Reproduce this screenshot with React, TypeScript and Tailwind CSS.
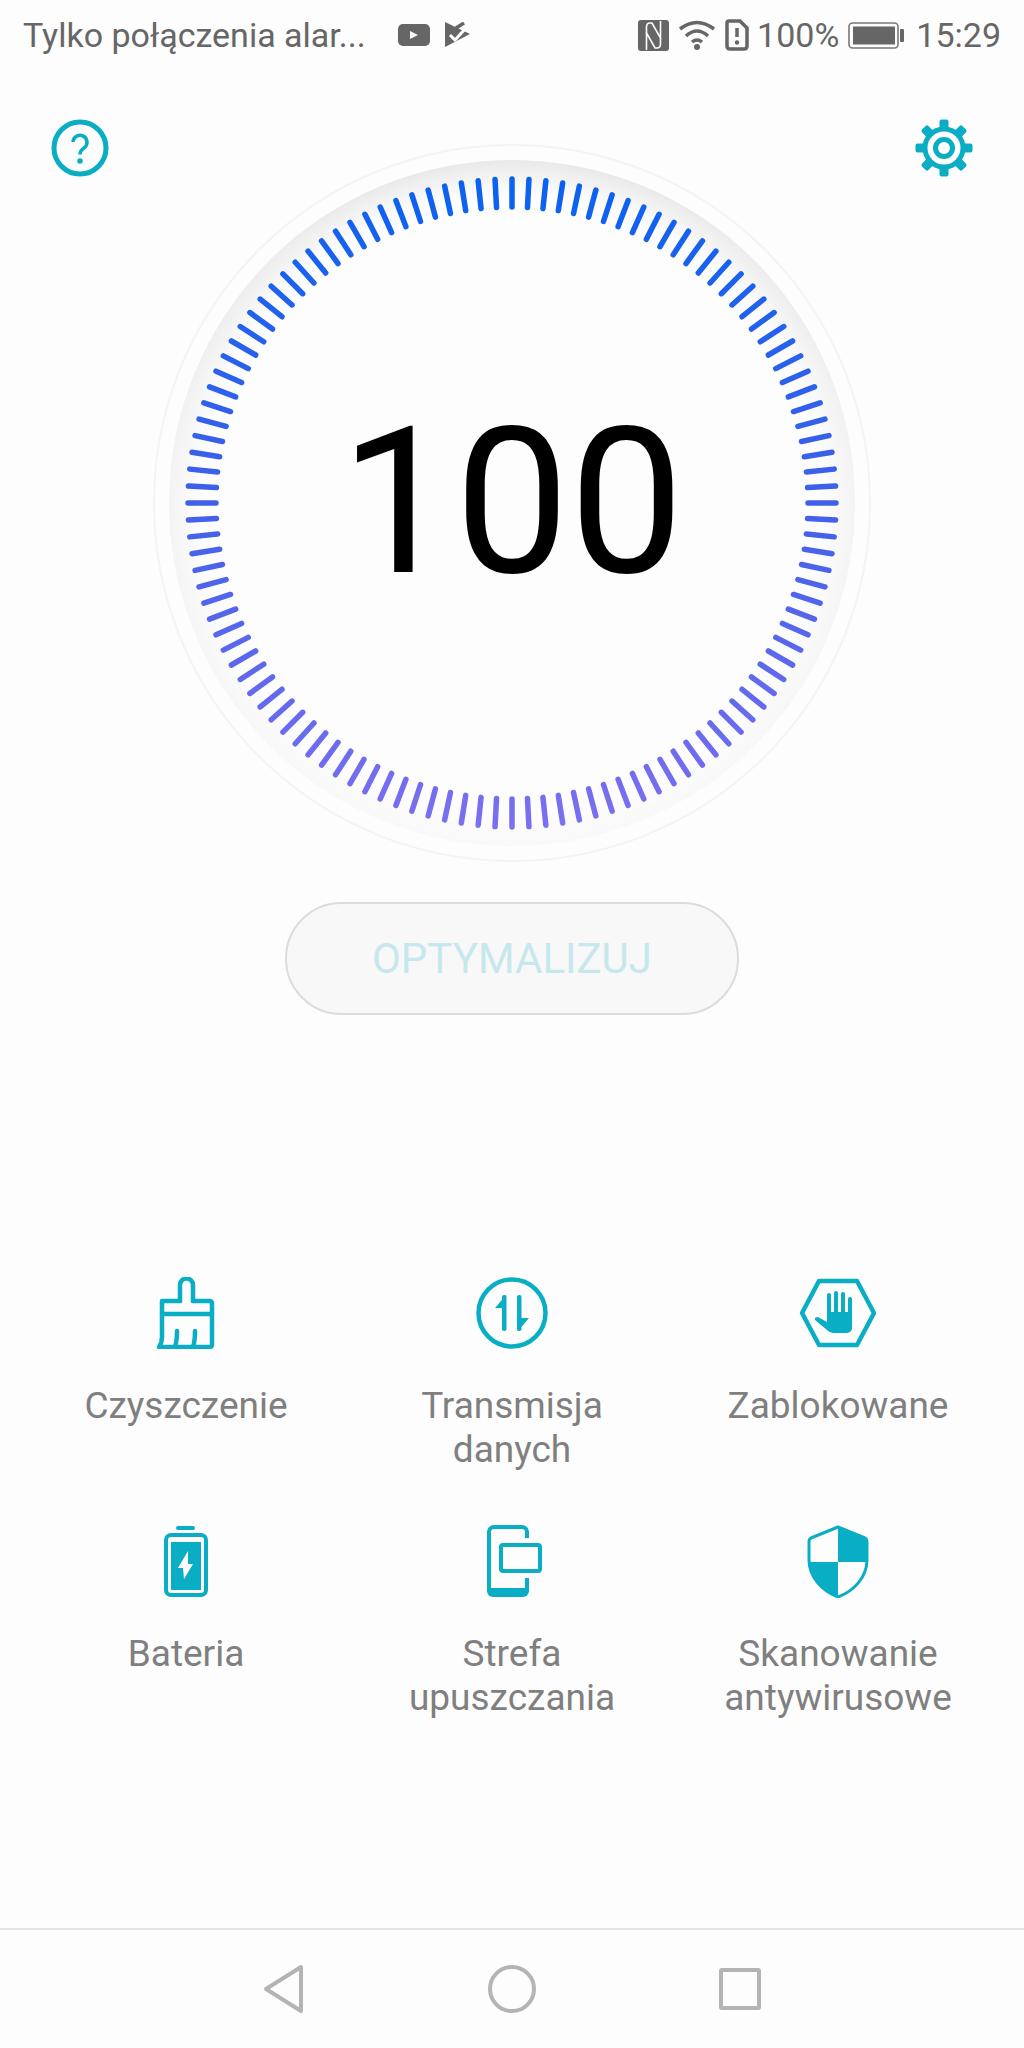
const TEAL = "#0aaec4";

const ticks = Array.from({ length: 120 }, (_, i) => i * 3);

const Dial = () => (
  <div className="relative w-[718px] h-[718px] mt-[24px] shrink-0">
    <svg width="718" height="718" viewBox="0 0 718 718" className="block">
      <defs>
        <linearGradient id="band" x1="0" y1="0" x2="0" y2="1">
          <stop offset="0" stopColor="#e9e9e9" />
          <stop offset="0.5" stopColor="#f4f4f4" />
          <stop offset="1" stopColor="#f9f9f9" />
        </linearGradient>
        <radialGradient id="fade" cx="0.5" cy="0.5" r="0.5">
          <stop offset="0.9" stopColor="#fdfdfd" stopOpacity="1" />
          <stop offset="1" stopColor="#fdfdfd" stopOpacity="0" />
        </radialGradient>
        <linearGradient id="ticks" gradientUnits="userSpaceOnUse" x1="0" y1="32" x2="0" y2="686">
          <stop offset="0" stopColor="#0a62f0" />
          <stop offset="0.5" stopColor="#4060ea" />
          <stop offset="1" stopColor="#7b70f0" />
        </linearGradient>
      </defs>
      <circle cx="359" cy="359" r="358" fill="none" stroke="#f4f4f4" strokeWidth="2" />
      <circle cx="359" cy="359" r="343" fill="url(#band)" />
      <circle cx="359" cy="359" r="343" fill="url(#fade)" />
      <path
        d={ticks
          .map((a) => {
            const r = (a * Math.PI) / 180;
            const x = Math.sin(r);
            const y = -Math.cos(r);
            return `M${359 + x * 296} ${359 + y * 296}L${359 + x * 324} ${359 + y * 324}`;
          })
          .join("")}
        fill="none"
        stroke="url(#ticks)"
        strokeWidth="5.5"
        strokeLinecap="round"
      />
    </svg>
    <div className="absolute inset-0 flex items-center justify-center text-[204px] leading-none text-black">
      100
    </div>
  </div>
);

const StatusBar = () => (
  <div className="h-[70px] flex items-center pl-[23px] pr-[23px] text-[34px] text-[#666666] shrink-0">
    <span className="w-[375px] whitespace-nowrap">Tylko połączenia alar...</span>
    <svg width="32" height="22" viewBox="0 0 32 22" className="shrink-0">
      <rect width="32" height="22" rx="5" fill="#666666" />
      <path d="M12 7 L20 11 L12 15Z" fill="#fdfdfd" />
    </svg>
    <svg width="26" height="26" viewBox="0 0 26 26" className="ml-[15px] shrink-0">
      <path d="M0 0 L25 12 L0 25Z" fill="#666666" />
      <path d="M11 6 L19 1" stroke="#666666" strokeWidth="3.5" fill="none" />
      <path d="M5 13 L10 18 L20 7" stroke="#fdfdfd" strokeWidth="3" fill="none" />
    </svg>
    <div className="flex-1" />
    <svg width="31" height="31" viewBox="0 0 31 31" className="shrink-0">
      <rect width="31" height="31" rx="3" fill="#666666" />
      <path d="M8.5 30 V7 Q8.5 3 12 3 H14 L23 19 M22.5 1 V24 Q22.5 28 19 28 H17 L8 12" stroke="#fdfdfd" strokeWidth="1.6" fill="none" />
    </svg>
    <svg width="38" height="30" viewBox="0 0 38 30" className="ml-[9px] shrink-0">
      <path d="M2 9 Q19 -4 36 9" stroke="#666666" strokeWidth="3.5" fill="none" />
      <path d="M8 16 Q19 6 30 16" stroke="#666666" strokeWidth="3.5" fill="none" />
      <path d="M14 22 Q19 18 24 22" stroke="#666666" strokeWidth="3.5" fill="none" />
      <circle cx="19" cy="27" r="3" fill="#666666" />
    </svg>
    <svg width="24" height="32" viewBox="0 0 24 32" className="ml-[9px] shrink-0">
      <path d="M4 2 H15 L22 9 V27 Q22 30 19 30 H5 Q2 30 2 27 V4 Q2 2 4 2Z" stroke="#666666" strokeWidth="3.5" fill="none" />
      <path d="M12 9 V18" stroke="#666666" strokeWidth="3.5" />
      <circle cx="12" cy="23.5" r="2.2" fill="#666666" />
    </svg>
    <span className="ml-[8px]">100%</span>
    <svg width="56" height="27" viewBox="0 0 56 27" className="ml-[9px] shrink-0">
      <rect x="1" y="1" width="49" height="25" rx="3.5" fill="none" stroke="#777777" strokeWidth="1.6" />
      <rect x="5" y="4.5" width="42" height="18" fill="#666666" />
      <rect x="52" y="7" width="4" height="13" rx="1" fill="#666666" />
    </svg>
    <span className="ml-[12px]">15:29</span>
  </div>
);

const HelpIcon = () => (
  <svg width="58" height="58" viewBox="0 0 58 58" className="shrink-0 -mt-[1px]">
    <circle cx="29" cy="29" r="26" fill="none" stroke={TEAL} strokeWidth="5" />
    <path d="M22 23 a7 7 0 1 1 11 6 q-4 2.5 -4 6.5" fill="none" stroke={TEAL} strokeWidth="3.5" />
    <circle cx="29" cy="42" r="2.8" fill={TEAL} />
  </svg>
);

const GearIcon = () => (
  <svg width="58" height="58" viewBox="0 0 58 58" className="shrink-0 -mt-[1px]">
    {[0, 45, 90, 135, 180, 225, 270, 315].map((a) => (
      <rect key={a} x="24.5" y="0.5" width="9" height="10" rx="2" fill={TEAL} transform={`rotate(${a} 29 29)`} />
    ))}
    <circle cx="29" cy="29" r="19" fill="none" stroke={TEAL} strokeWidth="5" />
    <circle cx="29" cy="29" r="8.5" fill="none" stroke={TEAL} strokeWidth="5" />
  </svg>
);

const BrushIcon = () => (
  <svg width="60" height="72" viewBox="0 0 60 72" fill="none" stroke={TEAL} strokeWidth="4.5" strokeLinecap="round" strokeLinejoin="round" className="-ml-[2px]">
    <path d="M25 24 V8 a6.5 6.5 0 0 1 13 0 V24" />
    <path d="M25 24 H7 V60 Q7 66 4 70 H55 a2 2 0 0 0 2 -2 V26 a2 2 0 0 0 -2 -2 H38" />
    <path d="M7 37 H57" />
    <path d="M22 54 Q22 64 20 70 M40 54 Q40 64 38 70" />
  </svg>
);

const TransferIcon = () => (
  <svg width="76" height="76" viewBox="0 0 76 76" fill={TEAL}>
    <circle cx="38" cy="38" r="33.5" fill="none" stroke={TEAL} strokeWidth="4.5" />
    <rect x="28" y="20" width="4.5" height="36" rx="2" />
    <path d="M32 20 L21 33 H32Z" />
    <rect x="43" y="20" width="4.5" height="36" rx="2" />
    <path d="M44 56 L55 43 H44Z" />
  </svg>
);

const BlockedIcon = () => (
  <svg width="76" height="70" viewBox="0 0 76 70" fill={TEAL}>
    <path d="M19 3 H57 L74 35 L57 67 H19 L2 35 Z" fill="none" stroke={TEAL} strokeWidth="4.5" strokeLinejoin="round" />
    <rect x="27" y="15" width="4" height="22" rx="2" />
    <rect x="34" y="13" width="4" height="24" rx="2" />
    <rect x="41" y="14" width="4" height="24" rx="2" />
    <rect x="48" y="19" width="4" height="20" rx="2" />
    <path d="M27 34 H52 V50 a5 5 0 0 1 -5 5 H33 Q30 55 27 52 L15 42 Q14 39 18 39 L27 44 Z" />
  </svg>
);

const BatteryIcon = () => (
  <svg width="44" height="73" viewBox="0 0 44 73" fill={TEAL}>
    <rect x="12" y="1" width="19" height="4" rx="2" />
    <rect x="2" y="10" width="40" height="60" rx="5" fill="none" stroke={TEAL} strokeWidth="4" />
    <rect x="7" y="17" width="30" height="48" />
    <path d="M24 26 L14 43 H19 L20 54 L29 39 H24Z" fill="#fdfdfd" />
  </svg>
);

const DropZoneIcon = () => (
  <svg width="58" height="74" viewBox="0 0 58 74" fill={TEAL} className="ml-[5px]">
    <path d="M41 14 V8 a5 5 0 0 0 -5 -5 H8 a5 5 0 0 0 -5 5 V66 M41 54 V66" fill="none" stroke={TEAL} strokeWidth="4" />
    <path d="M1 64 H43 V67 a6 6 0 0 1 -6 6 H7 a6 6 0 0 1 -6 -6Z" />
    <rect x="15" y="21" width="39" height="26" rx="2" fill="none" stroke={TEAL} strokeWidth="4" />
  </svg>
);

const ShieldIcon = () => (
  <svg width="62" height="73" viewBox="0 0 62 73" fill={TEAL}>
    <path d="M31 2 L58 13 Q60 14 60 17 V35 C60 52 47 66 31 72 C15 66 2 52 2 35 V17 Q2 14 4 13 Z" fill="none" stroke={TEAL} strokeWidth="3" strokeLinejoin="round" />
    <path d="M31 2 L58 13 Q60 14 60 17 V37 H31Z" />
    <path d="M2 37 H31 V72 C15 66 2 52 2 37Z" />
  </svg>
);

const tools = [
  { icon: <BrushIcon />, label: ["Czyszczenie"] },
  { icon: <TransferIcon />, label: ["Transmisja", "danych"] },
  { icon: <BlockedIcon />, label: ["Zablokowane"] },
  { icon: <BatteryIcon />, label: ["Bateria"] },
  { icon: <DropZoneIcon />, label: ["Strefa", "upuszczania"] },
  { icon: <ShieldIcon />, label: ["Skanowanie", "antywirusowe"] },
];

const App = () => {
  return (
    <div
      className="w-[1024px] h-[2048px] flex flex-col bg-[#fdfdfd] overflow-hidden"
      style={{ fontFamily: "Roboto, sans-serif" }}
    >
      <StatusBar />
      <div className="flex items-start justify-between px-[51px] mt-[50px]">
        <HelpIcon />
        <Dial />
        <GearIcon />
      </div>
      <button className="self-center w-[454px] h-[113px] mt-[40px] rounded-full border-2 border-[#dcdcdc] bg-[#f8f8f8] text-[42px] text-[#c6e8ec] shrink-0">
        OPTYMALIZUJ
      </button>
      <div className="grid grid-cols-3 px-[23px] mt-[262px]">
        {tools.map((t) => (
          <div key={t.label[0]} className="h-[248px] flex flex-col items-center">
            <div className="h-[72px] flex items-center justify-center">{t.icon}</div>
            <div className="mt-[35px] text-[37px] leading-[44px] text-[#7f7f7f] text-center whitespace-nowrap">
              {t.label.map((l) => (
                <div key={l}>{l}</div>
              ))}
            </div>
          </div>
        ))}
      </div>
      <div className="mt-auto h-[120px] border-t-2 border-[#e4e4e4] flex items-center justify-between px-[263px] shrink-0">
        <svg width="42" height="50" viewBox="0 0 42 50" fill="none" stroke="#b4b4b4" strokeWidth="4" strokeLinejoin="round">
          <path d="M38 3 L3 25 L38 47 Z" />
        </svg>
        <svg width="48" height="48" viewBox="0 0 48 48" fill="none" stroke="#b4b4b4" strokeWidth="4">
          <circle cx="24" cy="24" r="22" />
        </svg>
        <svg width="42" height="42" viewBox="0 0 42 42" fill="none" stroke="#b4b4b4" strokeWidth="4" strokeLinejoin="round">
          <rect x="2" y="2" width="38" height="38" rx="1" />
        </svg>
      </div>
    </div>
  );
};

export default App;
